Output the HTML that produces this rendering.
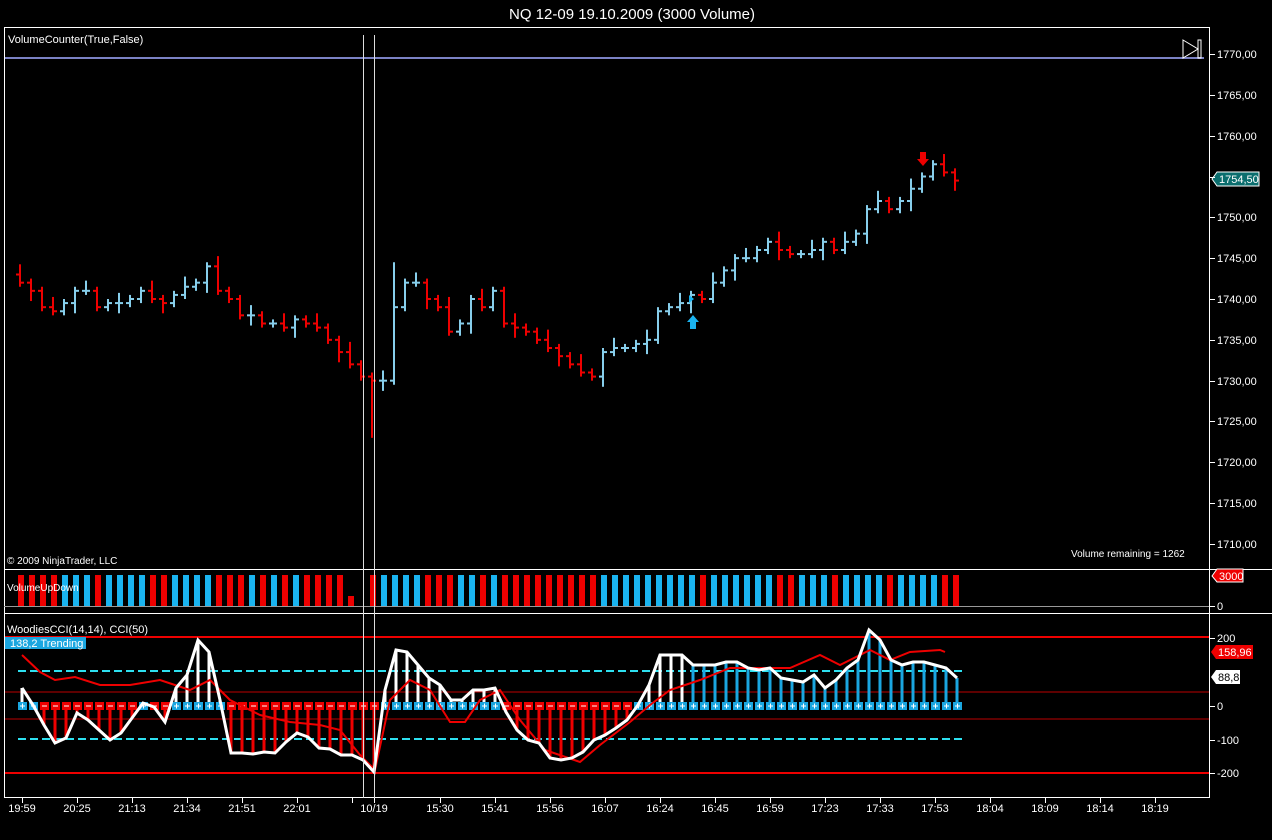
<!DOCTYPE html>
<html><head><meta charset="utf-8"><style>
html,body{margin:0;padding:0;background:#000;width:1272px;height:840px;overflow:hidden}
svg{position:absolute;left:0;top:0}
text{font-family:"Liberation Sans",sans-serif;font-size:11px;fill:#fff}
</style></head><body>
<svg id="s" width="1272" height="840" xmlns="http://www.w3.org/2000/svg">
<text x="632" y="19" text-anchor="middle" style="font-size:15px">NQ 12-09  19.10.2009 (3000 Volume)</text>
<rect x="4.5" y="27.5" width="1205" height="770" fill="none" stroke="#fff"/>
<line x1="4" y1="569.5" x2="1272" y2="569.5" stroke="#fff"/>
<line x1="4" y1="613.5" x2="1272" y2="613.5" stroke="#fff"/>
<line x1="4" y1="606.5" x2="1209" y2="606.5" stroke="#999"/>
<line x1="5" y1="58" x2="1204" y2="58" stroke="#7b82c4" stroke-width="2"/>
<g id="g"></g>
<line x1="363.5" y1="35" x2="363.5" y2="798" stroke="#ddd"/>
<line x1="374.5" y1="35" x2="374.5" y2="798" stroke="#ddd"/>
<text x="8" y="43">VolumeCounter(True,False)</text>
<text x="7" y="564" style="font-size:10px">© 2009 NinjaTrader, LLC</text>
<text x="1071" y="557" style="font-size:10px">Volume remaining = 1262</text>
<text x="7" y="591" style="font-size:10px">VolumeUpDown</text>
<text x="7" y="633">WoodiesCCI(14,14), CCI(50)</text>
<rect x="5" y="637" width="81" height="12" fill="#1aa6e0"/>
<text x="10" y="647">138,2 Trending</text>
<path d="M1183 40 L1198 49 L1183 58 Z" fill="none" stroke="#fff"/>
<rect x="1198" y="40" width="3" height="18" fill="none" stroke="#fff"/>
<g id="ax"></g>
<path d="M1212 179 L1217 172 L1259 172 L1259 186 L1217 186 Z" fill="#0b6e6e" stroke="#fff"/>
<text x="1219" y="183">1754,50</text>
<path d="M1212 576 L1217 569 L1243 569 L1243 582 L1217 582 Z" fill="#e00" stroke="#fff"/>
<text x="1219" y="580">3000</text>
<path d="M1211 652 L1216 645 L1253 645 L1253 659 L1216 659 Z" fill="#e00"/>
<text x="1218" y="656">158,96</text>
<path d="M1211 677 L1216 670 L1240 670 L1240 684 L1216 684 Z" fill="#fff"/>
<text x="1218" y="681" style="fill:#000">88,8</text>
<path d="M920 152h6v7h3l-6 7-6-7h3z" fill="#e00"/>
<path d="M690 329h6v-7h3l-6-7-6 7h3z" fill="#1ab4f0"/>
<path d="M689 295l5 4-5 4z" fill="#1ab4f0"/>
</svg>
<script>
var g=document.getElementById('g'),h='';
var C=[1742,1741,1739,1738.5,1739.5,1741,1741,1739,1739.5,1739.5,1740,1741,1740,1739.5,1740.5,1741.5,1742,1744,1741,1740,1738,1738,1737,1737,1736.5,1737.5,1737,1736.5,1735,1733.5,1732,1730.5,1730,1730,1739,1742,1742,1740,1739,1736,1737,1740,1739,1741,1737,1736.5,1736,1735,1734,1733,1732,1731,1730.5,1733.5,1734,1734,1734.5,1735,1738.5,1739,1739.5,1740.5,1740,1742,1743.5,1745,1745,1746,1747,1746,1745.5,1745.5,1746,1747,1746,1747,1748,1751,1752,1751,1752,1753.5,1755,1756.5,1755.5,1754.5];
function Y(p){return 54+(1770-p)*8.1667;}
var prev=1743;
for(var i=0;i<C.length;i++){
 var x=20+11*i,c=C[i],o=prev,up=c>=o,col=up?'#87ceeb':'#e00';
 var hi=Math.max(o,c)+0.5+(i%3==0?0.75:0),lo=Math.min(o,c)-0.5-(i%4==1?0.75:0);
 if(i==32)lo=1723;if(i==34)hi=1744.5;
 h+='<line x1="'+x+'" y1="'+Y(hi)+'" x2="'+x+'" y2="'+Y(lo)+'" stroke="'+col+'" stroke-width="2"/>';
 h+='<line x1="'+(x-4)+'" y1="'+Y(o)+'" x2="'+x+'" y2="'+Y(o)+'" stroke="'+col+'" stroke-width="2"/>';
 h+='<line x1="'+x+'" y1="'+Y(c)+'" x2="'+(x+4)+'" y2="'+Y(c)+'" stroke="'+col+'" stroke-width="2"/>';
 // volume
 var vh=31,vy=575;
 if(i==30){vy=596;vh=10;} if(i==31)vh=0;
 if(vh)h+='<rect x="'+(x-2)+'" y="'+vy+'" width="6" height="'+vh+'" fill="'+(up?'#1ab4f0':'#e00')+'"/>';
 prev=c;
}
// CCI panel lines
h+='<line x1="5" y1="637" x2="1209" y2="637" stroke="#e00" stroke-width="2"/>';
h+='<line x1="5" y1="773" x2="1209" y2="773" stroke="#e00" stroke-width="2"/>';
h+='<line x1="5" y1="692" x2="1209" y2="692" stroke="#b00"/>';
h+='<line x1="5" y1="719" x2="1209" y2="719" stroke="#b00"/>';
h+='<line x1="18" y1="671" x2="962" y2="671" stroke="#2de0f0" stroke-width="2" stroke-dasharray="8,4"/>';
h+='<line x1="18" y1="739" x2="962" y2="739" stroke="#2de0f0" stroke-width="2" stroke-dasharray="8,4"/>';
var W=[688,705,725,743,738,713,720,730,740,733,718,703,707,722,688,675,640,652,700,753,753,754,752,753,742,733,737,748,749,755,755,760,772,690,650,652,665,678,685,700,700,690,690,688,712,730,740,743,758,760,758,752,740,735,728,720,705,685,655,655,655,665,665,665,662,662,668,670,668,678,680,682,675,688,680,668,660,630,640,660,665,662,662,665,668,678];
var pts='';
for(var i=0;i<W.length;i++){
 var x=22+11*i,w=W[i];pts+=x+','+w+' ';
 var neg=w>706,col=neg?'#e00':(i>60?'#1aa6e0':'#fff');
 h+='<line x1="'+x+'" y1="706" x2="'+x+'" y2="'+w+'" stroke="'+col+'" stroke-width="3"/>';
 h+='<rect x="'+(x-4)+'" y="702" width="9" height="8" fill="'+(neg?'#e00':'#1aa6e0')+'"/>';
 h+='<line x1="'+(x-2)+'" y1="706" x2="'+(x+3)+'" y2="706" stroke="#fff"/>';
 if(!neg)h+='<line x1="'+(x+0.5)+'" y1="703.5" x2="'+(x+0.5)+'" y2="708.5" stroke="#fff"/>';
}
var R=[22,655,40,672,55,680,75,677,100,685,130,685,160,680,190,690,210,680,230,700,260,715,290,722,320,725,340,730,360,755,375,770,390,700,410,680,430,690,450,722,465,722,480,700,500,690,520,720,545,750,580,762,600,745,630,722,650,705,670,690,700,680,730,668,760,668,790,668,820,655,840,665,870,650,890,660,910,652,940,650,945,652].join(',').replace(/(\d+),(\d+),?/g,'$1,$2 ');
h+='<polyline points="'+R+'" fill="none" stroke="#e00" stroke-width="2"/>';
h+='<polyline points="'+pts+'" fill="none" stroke="#fff" stroke-width="3"/>';
g.innerHTML=h;
</script>
<svg width="1272" height="840" xmlns="http://www.w3.org/2000/svg" style="pointer-events:none">
<g stroke="#fff">
<line x1="1209" y1="54.5" x2="1215" y2="54.5"/><line x1="1209" y1="95.5" x2="1215" y2="95.5"/><line x1="1209" y1="136.5" x2="1215" y2="136.5"/><line x1="1209" y1="177.5" x2="1215" y2="177.5"/><line x1="1209" y1="217.5" x2="1215" y2="217.5"/><line x1="1209" y1="258.5" x2="1215" y2="258.5"/><line x1="1209" y1="299.5" x2="1215" y2="299.5"/><line x1="1209" y1="340.5" x2="1215" y2="340.5"/><line x1="1209" y1="381.5" x2="1215" y2="381.5"/><line x1="1209" y1="421.5" x2="1215" y2="421.5"/><line x1="1209" y1="462.5" x2="1215" y2="462.5"/><line x1="1209" y1="503.5" x2="1215" y2="503.5"/><line x1="1209" y1="544.5" x2="1215" y2="544.5"/>
<line x1="1209" y1="606.5" x2="1215" y2="606.5"/><line x1="1209" y1="638.5" x2="1215" y2="638.5"/><line x1="1209" y1="706.5" x2="1215" y2="706.5"/><line x1="1209" y1="740.5" x2="1215" y2="740.5"/><line x1="1209" y1="773.5" x2="1215" y2="773.5"/>
</g>
<g>
<text x="1217" y="58">1770,00</text><text x="1217" y="99">1765,00</text><text x="1217" y="140">1760,00</text><text x="1217" y="221">1750,00</text><text x="1217" y="262">1745,00</text><text x="1217" y="303">1740,00</text><text x="1217" y="344">1735,00</text><text x="1217" y="385">1730,00</text><text x="1217" y="425">1725,00</text><text x="1217" y="466">1720,00</text><text x="1217" y="507">1715,00</text><text x="1217" y="548">1710,00</text>
<text x="1217" y="610">0</text><text x="1217" y="642">200</text><text x="1217" y="710">0</text><text x="1217" y="744">-100</text><text x="1217" y="777">-200</text>
</g>
<g stroke="#fff">
<line x1="22.5" y1="798" x2="22.5" y2="803"/><line x1="77.5" y1="798" x2="77.5" y2="803"/><line x1="132.5" y1="798" x2="132.5" y2="803"/><line x1="187.5" y1="798" x2="187.5" y2="803"/><line x1="242.5" y1="798" x2="242.5" y2="803"/><line x1="297.5" y1="798" x2="297.5" y2="803"/><line x1="352.5" y1="798" x2="352.5" y2="803"/><line x1="374.5" y1="798" x2="374.5" y2="803"/><line x1="440.5" y1="798" x2="440.5" y2="803"/><line x1="495.5" y1="798" x2="495.5" y2="803"/><line x1="550.5" y1="798" x2="550.5" y2="803"/><line x1="605.5" y1="798" x2="605.5" y2="803"/><line x1="660.5" y1="798" x2="660.5" y2="803"/><line x1="715.5" y1="798" x2="715.5" y2="803"/><line x1="770.5" y1="798" x2="770.5" y2="803"/><line x1="825.5" y1="798" x2="825.5" y2="803"/><line x1="880.5" y1="798" x2="880.5" y2="803"/><line x1="935.5" y1="798" x2="935.5" y2="803"/><line x1="990.5" y1="798" x2="990.5" y2="803"/><line x1="1045.5" y1="798" x2="1045.5" y2="803"/><line x1="1100.5" y1="798" x2="1100.5" y2="803"/><line x1="1155.5" y1="798" x2="1155.5" y2="803"/>
</g>
<g text-anchor="middle">
<text x="22" y="812">19:59</text><text x="77" y="812">20:25</text><text x="132" y="812">21:13</text><text x="187" y="812">21:34</text><text x="242" y="812">21:51</text><text x="297" y="812">22:01</text><text x="374" y="812">10/19</text><text x="440" y="812">15:30</text><text x="495" y="812">15:41</text><text x="550" y="812">15:56</text><text x="605" y="812">16:07</text><text x="660" y="812">16:24</text><text x="715" y="812">16:45</text><text x="770" y="812">16:59</text><text x="825" y="812">17:23</text><text x="880" y="812">17:33</text><text x="935" y="812">17:53</text><text x="990" y="812">18:04</text><text x="1045" y="812">18:09</text><text x="1100" y="812">18:14</text><text x="1155" y="812">18:19</text>
</g>
</svg>
</body></html>
